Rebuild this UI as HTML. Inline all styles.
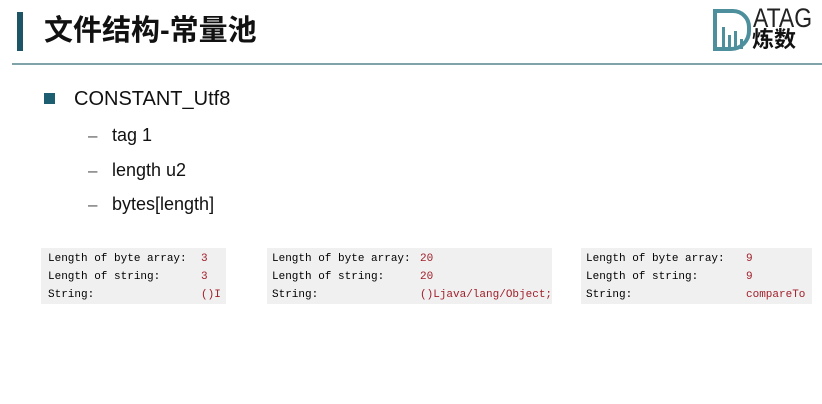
<!DOCTYPE html>
<html><head><meta charset="utf-8"><style>
body{margin:0;width:822px;height:404px;background:#fff;position:relative;overflow:hidden;font-family:"Liberation Sans","Noto Sans CJK SC",sans-serif}
.a{position:absolute}
.box{position:absolute;background:#f0f0f0;font-family:"Liberation Mono","Noto Serif CJK SC",monospace;font-size:11px;line-height:18px;padding-top:2px;color:#000}
.box div{position:relative;height:18px;white-space:pre}
.r{color:#a0202a;position:absolute}
</style></head><body>
<div class="a" style="left:17px;top:12px;width:6px;height:39px;background:#1d5466"></div>
<div class="a" style="left:44px;top:13px;font-size:29px;font-weight:bold;color:#111;line-height:36px">文件结构-常量池</div>
<div class="a" style="left:12px;top:63px;width:810px;height:2px;background:#7fa3a8"></div>
<svg class="a" style="left:713px;top:9px" width="40" height="42" viewBox="0 0 40 42">
<path d="M2 2h18a16 16 0 0 1 16 16v4a18 18 0 0 1 -18 18H2z" fill="none" stroke="#4d8f9c" stroke-width="4"/>
<rect x="9" y="18" width="3" height="22" fill="#4d8f9c"/><rect x="15" y="26" width="3" height="14" fill="#4d8f9c"/><rect x="21" y="22" width="3" height="18" fill="#4d8f9c"/><rect x="27" y="30" width="3" height="10" fill="#4d8f9c"/>
</svg>
<div class="a" style="left:753px;top:4px;font-size:27px;line-height:28px;color:#222;transform:scaleX(0.85);transform-origin:left">ATAG</div>
<div class="a" style="left:752px;top:28px;font-size:22px;line-height:24px;font-weight:bold;color:#111">炼数</div>
<div class="a" style="left:44px;top:93px;width:11px;height:11px;background:#1d5f70"></div>
<div class="a" style="left:74px;top:88px;font-size:20px;color:#111">CONSTANT_Utf8</div>
<div class="a" style="left:88px;top:126px;font-size:17px;color:#555">–</div>
<div class="a" style="left:112px;top:125px;font-size:18px;color:#111">tag 1</div>
<div class="a" style="left:88px;top:161px;font-size:17px;color:#555">–</div>
<div class="a" style="left:112px;top:160px;font-size:18px;color:#111">length u2</div>
<div class="a" style="left:88px;top:195px;font-size:17px;color:#555">–</div>
<div class="a" style="left:112px;top:194px;font-size:18px;color:#111">bytes[length]</div>

<div class="box" style="left:41px;top:248px;width:185px;height:54px">
<div style="left:7px">Length of byte array:<span class="r" style="left:153px">3</span></div>
<div style="left:7px">Length of string:<span class="r" style="left:153px">3</span></div>
<div style="left:7px">String:<span class="r" style="left:153px">()I</span></div>
</div>
<div class="box" style="left:267px;top:248px;width:285px;height:54px">
<div style="left:5px">Length of byte array:<span class="r" style="left:148px">20</span></div>
<div style="left:5px">Length of string:<span class="r" style="left:148px">20</span></div>
<div style="left:5px">String:<span class="r" style="left:148px">()Ljava/lang/Object;</span></div>
</div>
<div class="box" style="left:581px;top:248px;width:231px;height:54px">
<div style="left:5px">Length of byte array:<span class="r" style="left:160px">9</span></div>
<div style="left:5px">Length of string:<span class="r" style="left:160px">9</span></div>
<div style="left:5px">String:<span class="r" style="left:160px">compareTo</span></div>
</div>
</body></html>
